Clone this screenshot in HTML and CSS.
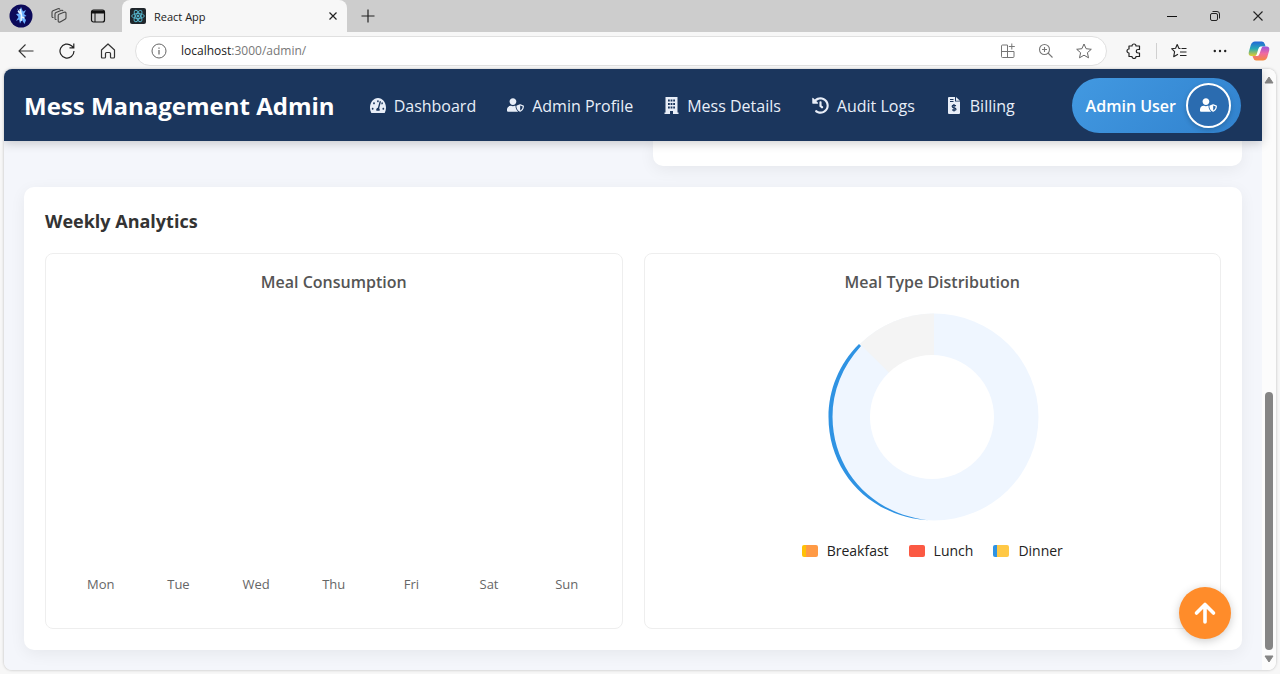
FILE: index.html
```html
<!DOCTYPE html>
<html lang="en">
<head>
<meta charset="utf-8">
<title>React App</title>
<link rel="stylesheet" href="styles.css">
</head>
<body>
<svg class="defs" aria-hidden="true">
  <symbol id="shield" viewBox="0 0 640 512"><path fill="currentColor" d="M622.3 271.1l-115.2-45c-4.1-1.6-12.6-3.7-22.2 0l-115.2 45c-10.7 4.2-17.7 14-17.7 24.9 0 111.6 68.7 188.8 132.9 213.9 9.6 3.7 18 1.6 22.2 0C558.4 489.9 640 420.5 640 296c0-10.9-7-20.7-17.7-24.9zM496 462.4V273.3l95.5 37.3c-5.6 87.1-60.9 135.4-95.5 151.8zM224 256c70.7 0 128-57.3 128-128S294.7 0 224 0 96 57.3 96 128s57.3 128 128 128zm96 40c0-2.5.8-4.8 1.1-7.2-2.5-.1-4.9-.8-7.5-.8h-16.7c-22.2 10.2-46.9 16-72.9 16s-50.6-5.8-72.9-16h-16.7C60.2 288 0 348.2 0 422.4V464c0 26.5 21.5 48 48 48h352c6.8 0 13.3-1.5 19.2-4-54-42.9-99.2-116.7-99.2-212z"/></symbol>
</svg>
<div class="browser">
  <div class="tabstrip">
    <button class="chrome-btn profile" aria-label="Profile">
      <svg width="24" height="24" viewBox="0 0 24 24"><circle cx="12" cy="12" r="11.5" fill="#0c0a5a"/><path d="M8 4l2.500 3.500L12 3l2 4.500 3-1.500-2 4 2.500 2-3 1 2.500 3-1.500 4-2.500-4-2 3.500-1-4-3 1.500 2.500-4L7 10l3-.5z" fill="#6cb0ff"/><path d="M11 5l1.500 6-.5 6M9 7l3 3M15.500 14l-3-1" stroke="#e8f6ff" stroke-width="1.500" fill="none"/></svg>
    </button>
    <button class="chrome-btn" aria-label="Workspaces">
      <svg width="18" height="18" viewBox="0 0 18 18" fill="none" stroke="#444" stroke-width="1.100" stroke-linejoin="round"><path d="M9 7.200l5-1.900q2-.6 2 1v4.500q0 1-1 1.500l-4.800 2.600q-2 .8-2-1V8.600q0-1 .8-1.400z"/><path d="M6.500 12.500q-1.500.3-1.500-1V7q0-1 1-1.500L11 3.400q1.600-.5 2 .8"/><path d="M3.500 10.500Q2 10.800 2 9.500V5.200q0-1 1-1.400L8 1.800q1.600-.5 2 .8"/></svg>
    </button>
    <button class="chrome-btn" aria-label="Tab actions">
      <svg width="16" height="16" viewBox="0 0 16 16" fill="none" stroke="#111"><rect x="1.500" y="2" width="13" height="12" rx="2" stroke-width="1.200"/><path d="M2 4h12" stroke-width="3"/><path d="M5 5v9"/></svg>
    </button>
    <div class="tab">
      <svg width="16" height="16" viewBox="0 0 16 16" fill="none" stroke="#57b9d1" stroke-width=".9"><rect width="16" height="16" rx="2" fill="#20272c" stroke="none"/><ellipse cx="8" cy="8" rx="6.300" ry="2.500"/><ellipse cx="8" cy="8" rx="6.300" ry="2.500" transform="rotate(60 8 8)"/><ellipse cx="8" cy="8" rx="6.300" ry="2.500" transform="rotate(120 8 8)"/><circle cx="8" cy="8" r="1" fill="#57b9d1"/></svg>
      <span class="tab-title">React App</span>
      <button class="chrome-btn" aria-label="Close tab"><svg width="10" height="10" viewBox="0 0 10 10" stroke="#222" stroke-width="1.200"><path d="M1.500 1.500l7 7M8.500 1.500l-7 7"/></svg></button>
    </div>
    <button class="chrome-btn new-tab" aria-label="New tab"><svg width="14" height="14" viewBox="0 0 14 14" stroke="#222" stroke-width="1.200"><path d="M7 .5v13M.5 7h13"/></svg></button>
    <div class="window-buttons">
      <button class="chrome-btn" aria-label="Minimize"><svg width="10" height="10" viewBox="0 0 10 10" stroke="#111"><path d="M0 5.500h10"/></svg></button>
      <button class="chrome-btn" aria-label="Restore"><svg width="10" height="10" viewBox="0 0 10 10" fill="none" stroke="#222"><rect x=".5" y="2.500" width="7" height="7" rx="1.500"/><path d="M2.500.5H7q2.500 0 2.500 2.500v4.500"/></svg></button>
      <button class="chrome-btn" aria-label="Close"><svg width="10" height="10" viewBox="0 0 10 10" stroke="#222" stroke-width="1.100"><path d="M.5.5l9 9M9.500.5l-9 9"/></svg></button>
    </div>
  </div>
  <div class="toolbar">
    <button class="chrome-btn" aria-label="Back"><svg width="16" height="16" viewBox="0 0 16 16" fill="none" stroke="#333" stroke-width="1.100"><path d="M15.500 8H1M7.500 1.500L1 8l6.500 6.500"/></svg></button>
    <button class="chrome-btn" aria-label="Refresh"><svg width="16" height="16" viewBox="0 0 16 16" fill="none" stroke="#222" stroke-width="1.200"><path d="M15 8A7 7 0 1 1 12.500 2.700L14.500 4.500M14.800.5v4.300h-4.300"/></svg></button>
    <button class="chrome-btn" aria-label="Home"><svg width="16" height="16" viewBox="0 0 16 16" fill="none" stroke="#333" stroke-width="1.200" stroke-linejoin="round"><path d="M1.500 7L8 1l6.500 6v7q0 1-1 1h-2q-1 0-1-1v-3.500q0-1-1-1h-3q-1 0-1 1V14q0 1-1 1h-2q-1 0-1-1z"/></svg></button>
    <div class="address">
      <svg width="16" height="16" viewBox="0 0 16 16" fill="none" stroke="#666"><circle cx="8" cy="8" r="7"/><path d="M8 7v4.500M8 4.500v1.300" stroke-width="1.200"/></svg>
      <span class="url"><span class="host">localhost</span>:3000/admin/</span>
      <button class="chrome-btn" aria-label="Install app"><svg width="16" height="16" viewBox="0 0 16 16" fill="none" stroke="#777"><path d="M7.500 2h-5q-1 0-1 1v10.500q0 1 1 1H13q1 0 1-1v-5H1.500M7.500 2v12.500M11.800.5v6M8.800 3.500h6"/></svg></button>
      <button class="chrome-btn" aria-label="Zoom"><svg width="16" height="16" viewBox="0 0 16 16" fill="none" stroke="#777" stroke-width="1.100"><circle cx="6.500" cy="6.500" r="5"/><path d="M10 10l4.500 4.500M4 6.500h5M6.500 4v5"/></svg></button>
      <button class="chrome-btn" aria-label="Add to favorites"><svg width="16" height="16" viewBox="0 0 16 16" fill="none" stroke="#666" stroke-linejoin="round"><path d="M8 1l2.100 4.700 5.200.6-3.900 3.400 1.100 5.100L8 12.200l-4.500 2.600 1.100-5.100L.7 6.300l5.200-.6z"/></svg></button>
    </div>
    <div class="tools">
      <button class="chrome-btn" aria-label="Extensions"><svg width="16" height="16" viewBox="0 0 16 16" fill="none" stroke="#222" stroke-width="1.200" stroke-linejoin="round"><path d="M3 3h3a2 2 0 0 1 4 0h3.500v3.500h-1.500a1.700 1.700 0 0 0 0 3.500h1.500v3.500H10a2 2 0 0 1-4 0H3V10a2 2 0 0 1 0-4z"/></svg></button>
      <span class="divider"></span>
      <button class="chrome-btn" aria-label="Favorites"><svg width="16" height="16" viewBox="0 0 16 16" fill="none" stroke="#222" stroke-width="1.100" stroke-linejoin="round"><path d="M9.500 5.500H8L6.200 1.500 4.600 5.300.6 5.700l3 2.900-.9 5.100 4.300-2.500M15.500 5.500H10.500M15.500 9H9M15.500 12.500H9"/></svg></button>
      <button class="chrome-btn" aria-label="Settings and more"><svg width="16" height="16" viewBox="0 0 16 16" fill="#222"><circle cx="2.800" cy="8" r="1.200"/><circle cx="8" cy="8" r="1.200"/><circle cx="13.200" cy="8" r="1.200"/></svg></button>
      <button class="chrome-btn" aria-label="Copilot"><svg width="22" height="20" viewBox="0 0 22 20"><defs><linearGradient id="cpa" x1="0" y1="0" x2="0" y2="1"><stop offset="0" stop-color="#2166d8"/><stop offset=".5" stop-color="#28aab5"/><stop offset="1" stop-color="#e4cc2d"/></linearGradient><linearGradient id="cpb" x1="0" y1="0" x2="0" y2="1"><stop offset="0" stop-color="#9b54dc"/><stop offset=".5" stop-color="#f06aa1"/><stop offset="1" stop-color="#f58a3c"/></linearGradient></defs><path d="M7 .5h7q2 0 3 3l.5 2h-3q-2 0-3 3l-1.500 4q-1 2.500-3 2.500H3.500Q0 15 .8 11l2-7Q4 .5 7 .5z" fill="url(#cpa)"/><path d="M15 19.500H8q-2 0-3-3L4.500 15H7q2 0 3-2.500l1.500-4q1-3 3-3h4q3.500 0 2.700 4l-2 7q-1.200 3-4.200 3z" fill="url(#cpb)"/><path d="M12.500 5.500q-1.500 0-2.200 2.500L8.800 13q-.4 1.700-1.300 2h1.800q1.500 0 2.300-2.500L13.200 8q.5-2 1.500-2.500z" fill="#fff"/></svg></button>
    </div>
  </div>
  <div class="viewport">
    <div class="page">
      <header class="navbar">
        <h1 class="brand">Mess Management Admin</h1>
        <nav class="nav">
          <a class="nav-link" href="#dashboard"><svg width="16" height="15" viewBox="0 32 576 448" preserveAspectRatio="none"><path fill="currentColor" d="M288 32C128.940 32 0 160.940 0 320c0 52.800 14.250 102.260 39.060 144.800 5.610 9.620 16.300 15.200 27.440 15.200h443c11.140 0 21.830-5.580 27.440-15.200C561.750 422.260 576 372.800 576 320c0-159.060-128.940-288-288-288zm0 64c14.710 0 26.580 10.130 30.320 23.650-1.110 2.260-2.640 4.230-3.450 6.670l-9.220 27.670c-5.130 3.490-10.970 6.010-17.640 6.010-17.670 0-32-14.330-32-32S270.330 96 288 96zM96 384c-17.670 0-32-14.330-32-32s14.330-32 32-32 32 14.330 32 32-14.330 32-32 32zm48-160c-17.670 0-32-14.330-32-32s14.330-32 32-32 32 14.330 32 32-14.330 32-32 32zm246.770-72.410l-61.330 184C343.130 347.330 352 364.540 352 384c0 11.720-3.380 22.550-8.880 32H232.880c-5.500-9.450-8.880-20.280-8.880-32 0-33.940 26.500-61.430 59.900-63.590l61.340-184.010c4.170-12.560 17.730-19.450 30.360-15.170 12.570 4.190 19.350 17.790 15.170 30.360zm14.660 57.200l15.520-46.550c3.470-1.290 7.130-2.230 11.050-2.230 17.670 0 32 14.330 32 32s-14.330 32-32 32c-11.380-.01-20.890-6.280-26.570-15.220zM480 384c-17.670 0-32-14.330-32-32s14.330-32 32-32 32 14.330 32 32-14.330 32-32 32z"/></svg><span>Dashboard</span></a>
          <a class="nav-link" href="#profile"><svg width="17" height="14"><use href="#shield"/></svg><span>Admin Profile</span></a>
          <a class="nav-link" href="#mess"><svg width="15" height="17" viewBox="0 0 15 17"><path fill="currentColor" fill-rule="evenodd" d="M1.500 0h12v15.500H14.500V17H9v-3H6v3H.5v-1.500h1zM4 2.500v2h1.800v-2zm2.600 0v2h1.800v-2zm2.600 0v2H11v-2zM4 6v2h1.800V6zm2.600 0v2h1.800V6zm2.600 0v2H11V6zM4 9.500v2h1.800v-2zm2.600 0v2h1.800v-2zm2.600 0v2H11v-2z"/></svg><span>Mess Details</span></a>
          <a class="nav-link" href="#audit"><svg width="17" height="17" viewBox="0 0 512 512"><path fill="currentColor" d="M504 255.531c.253 136.640-111.180 248.372-247.820 248.468-59.015.042-113.223-20.530-155.822-54.911-11.077-8.940-11.905-25.541-1.839-35.607l11.267-11.267c8.609-8.609 22.353-9.551 31.891-1.984C173.062 425.135 212.781 440 256 440c101.705 0 184-82.311 184-184 0-101.705-82.311-184-184-184-48.814 0-93.149 18.969-126.068 49.932l50.754 50.754c10.080 10.080 2.941 27.314-11.313 27.314H24c-8.837 0-16-7.163-16-16V38.627c0-14.254 17.234-21.393 27.314-11.314l49.372 49.372C129.209 34.136 189.552 8 256 8c136.810 0 247.747 110.780 248 247.531zm-180.912 78.784l9.823-12.630c8.138-10.463 6.253-25.542-4.210-33.679L288 256.349V152c0-13.255-10.745-24-24-24h-16c-13.255 0-24 10.745-24 24v135.651l65.409 50.874c10.463 8.137 25.541 6.253 33.679-4.210z"/></svg><span>Audit Logs</span></a>
          <a class="nav-link" href="#billing"><svg width="16" height="17" viewBox="0 0 16 17"><path fill="currentColor" fill-rule="evenodd" d="M3 0H9v4.500h5V16q0 1-1 1H3Q2 17 2 16V1q0-1 1-1zM4 2v1h3.500V2zm0 2v1h3.500V4z"/><path fill="currentColor" d="M10 0L14 3.700H10z"/><path d="M10 8.700q-3.800-1-3.800.8 0 .9 1.900 1.300t1.900 1.400q0 1.600-3.900.6M8 7v7.500" fill="none" stroke="#1b365d" stroke-width="1.200"/></svg><span>Billing</span></a>
        </nav>
        <button class="user"><span>Admin User</span><span class="avatar"><svg width="17" height="14"><use href="#shield"/></svg></span></button>
      </header>
      <main class="content">
        <div class="overview"><section class="card overview-card"></section></div>
        <section class="card analytics">
          <h2 class="title">Weekly Analytics</h2>
          <div class="charts">
            <article class="chart">
              <h3 class="chart-title">Meal Consumption</h3>
              <div class="days"><span>Mon</span><span>Tue</span><span>Wed</span><span>Thu</span><span>Fri</span><span>Sat</span><span>Sun</span></div>
            </article>
            <article class="chart">
              <h3 class="chart-title">Meal Type Distribution</h3>
              <svg class="donut" width="214" height="208" viewBox="0 0 214 208" role="img" aria-label="Meal type distribution">
                <ellipse cx="109" cy="104" rx="104.500" ry="103.500" fill="#eff6ff"/>
                <path d="M109 104V.5A104.500 103.500 0 0 0 35 31z" fill="#f4f4f4"/>
                <path d="M34 31C14 51 3.500 77 3.500 104 3.500 160 46 205 107 207.500 50 203 8 160 7.500 104 7.500 78 17 54 36 33z" fill="#2f93e3"/>
                <circle cx="107" cy="104" r="62" fill="#fff"/>
              </svg>
              <ul class="legend">
                <li><i class="swatch breakfast"></i>Breakfast</li>
                <li><i class="swatch lunch"></i>Lunch</li>
                <li><i class="swatch dinner"></i>Dinner</li>
              </ul>
            </article>
          </div>
        </section>
      </main>
      <button class="to-top" aria-label="Back to top"><svg width="24" height="24" viewBox="0 0 24 24" fill="none" stroke="#fff" stroke-width="3.600" stroke-linecap="round" stroke-linejoin="round"><path d="M12 21V4M3.500 12L12 3.500l8.500 8.500"/></svg></button>
    </div>
    <div class="scrollbar">
      <svg width="10" height="8" viewBox="0 0 10 8"><path d="M5 1l4 6H1z" fill="#858585" stroke="#858585" stroke-linejoin="round"/></svg>
      <div class="track"><div class="thumb"></div></div>
      <svg width="10" height="8" viewBox="0 0 10 8"><path d="M5 7l4-6H1z" fill="#858585" stroke="#858585" stroke-linejoin="round"/></svg>
    </div>
  </div>
</div>
</body>
</html>
```
FILE: styles.css
```css
* { box-sizing: border-box; }
body { margin: 0; font-family: "Open Sans", "Noto Sans", sans-serif; color: #333; }
h1, h2, h3, ul { margin: 0; padding: 0; }
button { font: inherit; border: 0; padding: 0; background: none; color: inherit; }
svg { display: block; flex: none; }
.defs { position: absolute; width: 0; height: 0; }

.browser { height: 100vh; display: flex; flex-direction: column; background: #f7f7f7; overflow: hidden; }
.chrome-btn { display: flex; align-items: center; justify-content: center; flex: none; }

.tabstrip { display: flex; align-items: center; height: 32px; padding-left: 9px; background: #cdcdcd; }
.tabstrip > .chrome-btn { width: 24px; margin-right: 15px; }
.tabstrip > .profile { margin-right: 14px; }
.tab { display: flex; align-items: center; gap: 8px; align-self: stretch; width: 225px; margin-left: -3px; padding: 0 9px 0 8px; background: #f7f7f7; border-radius: 8px 8px 0 0; font-size: 11px; color: #222; }
.tab-title { flex: 1; }
.tabstrip > .new-tab { margin-left: 9px; }
.window-buttons { display: flex; gap: 33px; margin-left: auto; padding-right: 17px; }

.toolbar { display: flex; align-items: center; gap: 25px; height: 37px; padding: 0 10px 0 18px; }
.address { flex: 1; display: flex; align-items: center; gap: 22px; height: 30px; margin-left: -6px; padding: 0 14px 0 15px; background: #fff; border: 1px solid #e0e0e0; border-radius: 15px; }
.url { flex: 1; margin-left: -8px; font-size: 12px; color: #777; }
.host { color: #222; }
.tools { display: flex; align-items: center; gap: 14px; margin-left: -6px; }
.tools .chrome-btn:last-child { margin-left: 6px; }
.tools .chrome-btn:nth-last-child(2) { margin-left: 11px; }
.divider { width: 1px; height: 16px; background: #d0d0d0; }

.viewport { flex: 1; min-height: 0; display: flex; margin: 0 4px 4px; background: #fcfcfc; border-radius: 8px; overflow: hidden; box-shadow: 0 0 3px rgba(0, 0, 0, .25); }
.page { flex: 1; min-width: 0; position: relative; background: #f4f6fb; }
.navbar { position: relative; z-index: 1; display: flex; align-items: center; height: 72px; padding: 0 21px 0 20px; background: #1b365d; color: #fff; box-shadow: 0 2px 10px rgba(0, 0, 0, .2); }
.brand { padding-top: 2px; font-size: 24px; font-weight: 700; line-height: 32px; white-space: nowrap; }
.nav { display: flex; gap: 31px; margin-left: 35px; }
.nav-link { display: flex; align-items: center; gap: 8px; color: #e8eef8; font-size: 16px; line-height: 24px; text-decoration: none; white-space: nowrap; }
.nav-link span, .user > span:first-child { padding-top: 2px; }
.user { display: flex; align-items: center; gap: 10px; height: 55px; margin-left: auto; padding: 0 10px 0 14px; border-radius: 28px; background: linear-gradient(135deg, #4299e1, #3182ce); font-size: 16px; font-weight: 600; white-space: nowrap; }
.avatar { display: flex; align-items: center; justify-content: center; width: 45px; height: 45px; border: 2px solid #fff; border-radius: 50%; background: #2b6cb0; box-shadow: 0 2px 5px rgba(0, 0, 0, .2); }

.content { padding: 0 20px; }
.card { background: #fff; border-radius: 10px; box-shadow: 0 4px 16px rgba(0, 0, 0, .06); }
.overview { display: grid; grid-template-columns: 1fr 1fr; gap: 40px; margin-bottom: 21px; }
.overview-card { grid-column: 2; height: 25px; border-radius: 0 0 10px 10px; }
.analytics { padding: 21px; }
.title { font-size: 18px; line-height: 26px; font-weight: 700; color: #333; }
.charts { display: grid; grid-template-columns: 1fr 1fr; gap: 21px; margin-top: 19px; }
.chart { display: flex; flex-direction: column; align-items: center; min-height: 376px; padding: 16px; border: 1px solid #eee; border-radius: 8px; }
.chart-title { font-size: 16px; line-height: 24px; font-weight: 600; color: #555; }
.days { align-self: stretch; display: grid; grid-template-columns: repeat(7, 1fr); margin-top: auto; padding: 0 0 18px; font-size: 13px; line-height: 20px; color: #666; text-align: center; }
.donut { margin-top: 19px; }
.legend { display: flex; gap: 20px; margin-top: 19px; list-style: none; font-size: 14px; line-height: 22px; color: #222; }
.legend li { display: flex; align-items: center; gap: 9px; }
.swatch { width: 16px; height: 12px; border-radius: 2px; }
.breakfast { background: linear-gradient(90deg, #ffc107 4px, #ff9a45 4px); }
.lunch { background: #fb5943; }
.dinner { background: linear-gradient(90deg, #2f93e3 4px, #ffc845 4px); }

.to-top { position: absolute; right: 31px; bottom: 31px; z-index: 2; display: flex; align-items: center; justify-content: center; width: 52px; height: 52px; border-radius: 50%; background: #ff8c2a; box-shadow: 0 2px 10px rgba(0, 0, 0, .2); }

.scrollbar { display: flex; flex-direction: column; align-items: center; gap: 5px; width: 14px; padding: 7px 0; background: #fcfcfc; }
.track { flex: 1; display: flex; flex-direction: column; justify-content: flex-end; }
.thumb { width: 8px; height: 46%; border-radius: 4px; background: #858585; }
```
